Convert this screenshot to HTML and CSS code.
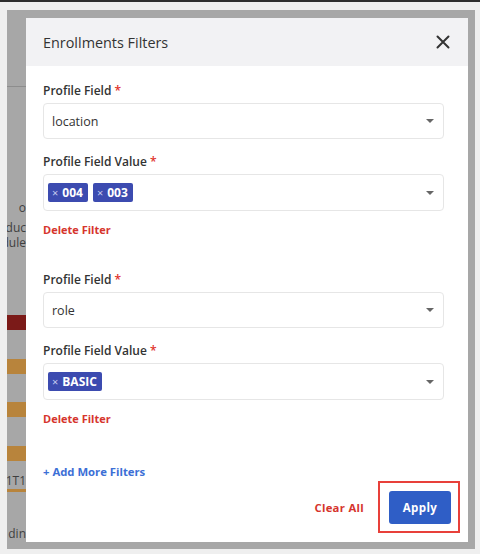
FILE: index.html
```html
<!DOCTYPE html>
<html>
<head>
    <title>Enrollments Filters</title>
    <link rel="stylesheet" href="styles.css">
</head>
<body>
<div class="topbar"></div>
<div class="frame">
    <div class="strip">
        <div class="rule" style="margin-top:68px"></div>
        <div class="ghost" style="margin-top:113px">o</div>
        <div class="ghost" style="margin-top:5px">rduc</div>
        <div class="ghost">dule</div>
        <div class="bar red" style="margin-top:65px"></div>
        <div class="bar orange" style="margin-top:29px"></div>
        <div class="bar orange" style="margin-top:28px"></div>
        <div class="bar orange" style="margin-top:29px"></div>
        <div class="ghost" style="margin-top:12px">1T1</div>
        <div class="bar orange thin" style="margin-top:1px"></div>
        <div class="ghost" style="margin-top:34px">din</div>
    </div>

    <div class="modal">
        <div class="modal-header">
            <h3>Enrollments Filters</h3>
            <svg class="close" width="14" height="14" viewBox="0 0 14 14">
                <path d="M1.5 1.5 L12.5 12.5 M12.5 1.5 L1.5 12.5" stroke="#333" stroke-width="2" stroke-linecap="round"/>
            </svg>
        </div>

        <div class="modal-body">
            <div class="filter">
                <label class="field-label">Profile Field <span class="req">*</span></label>
                <div class="select">
                    <span>location</span>
                    <span class="caret"></span>
                </div>
                <label class="field-label second">Profile Field Value <span class="req">*</span></label>
                <div class="select multi">
                    <div class="chips">
                        <span class="chip"><span class="x">&times;</span>004</span>
                        <span class="chip"><span class="x">&times;</span>003</span>
                    </div>
                    <span class="caret"></span>
                </div>
                <a class="delete">Delete Filter</a>
            </div>

            <div class="filter next">
                <label class="field-label">Profile Field <span class="req">*</span></label>
                <div class="select">
                    <span>role</span>
                    <span class="caret"></span>
                </div>
                <label class="field-label second">Profile Field Value <span class="req">*</span></label>
                <div class="select multi">
                    <div class="chips">
                        <span class="chip"><span class="x">&times;</span>BASIC</span>
                    </div>
                    <span class="caret"></span>
                </div>
                <a class="delete">Delete Filter</a>
            </div>

            <a class="add-more">+ Add More Filters</a>
        </div>

        <div class="modal-footer">
            <a class="clear">Clear All</a>
            <div class="highlight">
                <button class="apply">Apply</button>
            </div>
        </div>
    </div>

    <div class="strip right"></div>
</div>
</body>
</html>
```

FILE: styles.css
```css
body {
    margin: 0;
    background-color: #efefef;
    font-family: "Open Sans", "Noto Sans", sans-serif;
    color: #333;
}

.topbar {
    height: 2px;
    background-color: #2e2e2e;
}

.frame {
    display: flex;
    margin: 8px 5px 0 7px;
    padding: 8px 0 7px 0;
    height: 524px;
    background-color: #a7a7a7;
}

.strip {
    width: 19px;
    overflow: hidden;
    display: flex;
    flex-direction: column;
    flex-shrink: 0;
}

.strip.right {
    width: 7px;
}

.rule {
    height: 1px;
    background-color: #8d8d8d;
}

.ghost {
    height: 15px;
    line-height: 15px;
    font-size: 12px;
    color: #3f3f3f;
    white-space: nowrap;
    text-align: right;
    direction: rtl;
}

.bar {
    height: 15px;
}

.bar.red {
    background-color: #7b1a18;
}

.bar.orange {
    background-color: #b8843c;
}

.bar.thin {
    height: 3px;
}

.modal {
    flex: 1;
    display: flex;
    flex-direction: column;
    background-color: #fff;
}

.modal-header {
    height: 48px;
    display: flex;
    align-items: center;
    justify-content: space-between;
    padding: 0 18px 0 17px;
    background-color: #f2f2f4;
}

.modal-header h3 {
    margin: 0;
    font-size: 14.4px;
    font-weight: 500;
    color: #333;
}

.modal-body {
    flex: 1;
    padding: 16px 24px 0 17px;
}

.field-label {
    display: block;
    height: 18px;
    line-height: 18px;
    margin-bottom: 3px;
    font-size: 12px;
    font-weight: 600;
    color: #333;
}

.field-label.second {
    margin-top: 14px;
}

.req {
    color: #e0322c;
}

.select {
    height: 36px;
    box-sizing: border-box;
    display: flex;
    align-items: center;
    justify-content: space-between;
    padding: 0 9px 0 8px;
    border: 1px solid #e6e6e6;
    border-radius: 4px;
    font-size: 12.5px;
    color: #333;
}

.select.multi {
    height: 37px;
    padding-left: 4px;
}

.caret {
    width: 0;
    height: 0;
    border-left: 4px solid transparent;
    border-right: 4px solid transparent;
    border-top: 4px solid #666;
}

.chips {
    display: flex;
    gap: 5px;
}

.chip {
    display: inline-flex;
    align-items: center;
    height: 19px;
    padding: 0 5px 0 4px;
    background-color: #3c4bb0;
    border-radius: 2px;
    color: #fff;
    font-size: 12px;
    font-weight: 700;
}

.chip .x {
    margin-right: 4px;
    font-size: 11px;
    font-weight: 400;
    color: #c5cbef;
}

.delete {
    display: block;
    margin-top: 10px;
    height: 18px;
    line-height: 18px;
    font-size: 11px;
    font-weight: 700;
    color: #d6352d;
}

.filter.next {
    margin-top: 32px;
}

.add-more {
    display: block;
    margin-top: 35px;
    height: 18px;
    line-height: 18px;
    font-size: 11.3px;
    font-weight: 700;
    color: #3c6fd6;
}

.modal-footer {
    display: flex;
    align-items: center;
    justify-content: flex-end;
    padding: 0 8px 9px 0;
}

.clear {
    margin-right: 14px;
    font-size: 11.3px;
    font-weight: 700;
    color: #d6352d;
    letter-spacing: 0.3px;
}

.highlight {
    padding: 8px 7px 7px 9px;
    border: 2px solid #e8403a;
}

.apply {
    width: 62px;
    height: 33px;
    border: none;
    border-radius: 3px;
    background-color: #2f5ec6;
    color: #fff;
    font-family: "Open Sans", "Noto Sans", sans-serif;
    font-size: 11.5px;
    font-weight: 700;
    letter-spacing: 0.4px;
    cursor: pointer;
}
```
